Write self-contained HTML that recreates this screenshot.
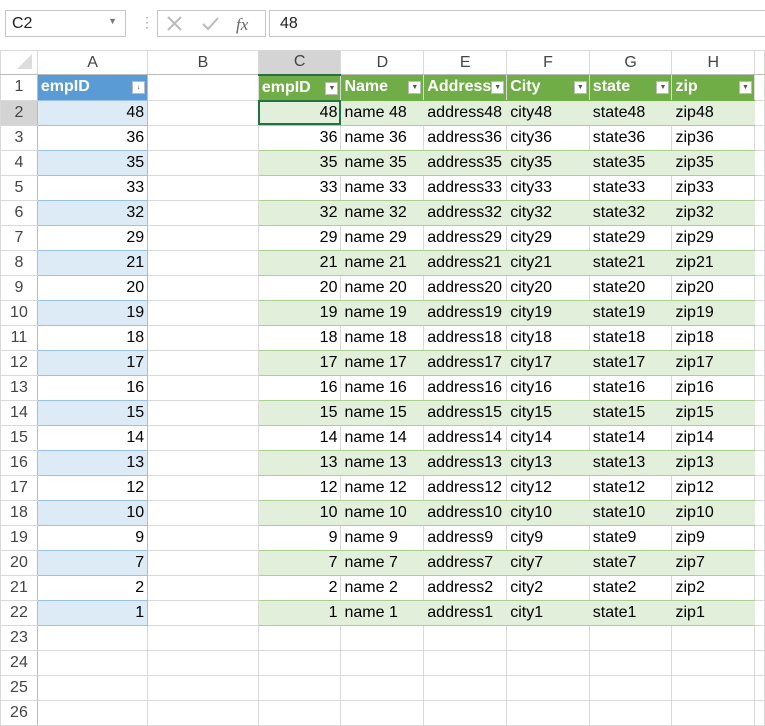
<!DOCTYPE html>
<html><head><meta charset="utf-8"><style>
body{margin:0;width:765px;height:725px;overflow:hidden;background:#fff;font-family:"Liberation Sans",Arial,sans-serif;position:relative}
.nb{position:absolute;left:5px;top:10px;width:121px;height:27px;border:1px solid #c6c6c6;box-sizing:border-box;font-size:16px;color:#222;padding:4px 6px}
.nb .ar{position:absolute;right:8px;top:5px;font-size:9px;color:#777}
.dots{position:absolute;left:140px;top:14px;color:#aaa;font-size:14px}
.fx{position:absolute;left:157px;top:10px;width:109px;height:27px;border:1px solid #c6c6c6;box-sizing:border-box}
.fi{position:absolute;left:269px;top:10px;width:500px;height:27px;border:1px solid #c6c6c6;box-sizing:border-box;font-size:16px;padding:4px 10px;color:#222}
table{position:absolute;left:0;top:50px;border-collapse:collapse;table-layout:fixed;font-size:16px}
td,th{height:24px;padding:0 3px;border:1px solid #d9d9d9;overflow:hidden;white-space:nowrap;color:#000;font-weight:normal}
th{background:#fff;color:#444;text-align:center;padding:0}
thead th{background:#fff;height:21px;border-bottom:1px solid #bbb;font-size:16px}
tbody th{border-right:1px solid #bbb}
td.n{text-align:right}
tbody tr:nth-child(even) td.a{background:#ddebf7}
tbody tr:nth-child(even) td.g{background:#e2efda}
tr.h td.a{background:#5b9bd5;color:#fff;font-weight:bold}
tr.h td.g{background:#70ad47;color:#fff;font-weight:bold}
td.a{border-color:#9bc2e6}
td.g{border-top-color:#a9d08e;border-bottom-color:#a9d08e;border-left-color:#e2efda;border-right-color:#e2efda}
tbody tr:nth-child(odd) td.g{border-left-color:#d9d9d9;border-right-color:#d9d9d9}
tr.h td.g{border-color:#70ad47}
.dd{display:inline-block;width:13px;height:13px;background:#fff;border:1px solid #bbb;box-sizing:border-box;position:absolute;right:2px;top:6px;font-size:7px;color:#555;text-align:center;line-height:11px;font-weight:normal}
tr.h td{position:relative}
.sel{outline:2px solid #217346;outline-offset:-2px}
</style></head><body>
<div class="nb">C2<span class="ar">▼</span></div>
<div class="dots">⋮</div>
<div class="fx"><svg width="107" height="25"><path d="M10 6l13 13M23 6L10 19" stroke="#bbb" stroke-width="2" fill="none"/><path d="M45 13l5 5 10-11" stroke="#bbb" stroke-width="2" fill="none"/><text x="78" y="19" font-family="Liberation Serif" font-style="italic" font-size="17" fill="#666">fx</text></svg></div>
<div class="fi">48</div>
<table>
<colgroup><col style="width:37px"><col style="width:111px"><col style="width:112px"><col style="width:83px"><col style="width:83px"><col style="width:83px"><col style="width:83px"><col style="width:83px"><col style="width:83px"><col style="width:10px"></colgroup>
<thead><tr><th style="background:#fff"><svg width="30" height="18"><path d="M28 3V18H13Z" fill="#ddd"/></svg></th><th>A</th><th>B</th><th style="background:#d4d4d4;border-bottom:2px solid #217346">C</th><th>D</th><th>E</th><th>F</th><th>G</th><th>H</th><th></th></tr></thead>
<tbody>
<tr class="h"><th>1</th><td class="a">empID<span class="dd">↓</span></td><td></td><td class="g">empID<span class="dd">▼</span></td><td class="g">Name<span class="dd">▼</span></td><td class="g">Address<span class="dd">▼</span></td><td class="g">City<span class="dd">▼</span></td><td class="g">state<span class="dd">▼</span></td><td class="g">zip<span class="dd">▼</span></td><td></td></tr>
<tr><th style="background:#d4d4d4">2</th><td class="a n">48</td><td></td><td class="g n sel">48</td><td class="g">name 48</td><td class="g">address48</td><td class="g">city48</td><td class="g">state48</td><td class="g">zip48</td><td></td></tr>
<tr><th>3</th><td class="a n">36</td><td></td><td class="g n">36</td><td class="g">name 36</td><td class="g">address36</td><td class="g">city36</td><td class="g">state36</td><td class="g">zip36</td><td></td></tr>
<tr><th>4</th><td class="a n">35</td><td></td><td class="g n">35</td><td class="g">name 35</td><td class="g">address35</td><td class="g">city35</td><td class="g">state35</td><td class="g">zip35</td><td></td></tr>
<tr><th>5</th><td class="a n">33</td><td></td><td class="g n">33</td><td class="g">name 33</td><td class="g">address33</td><td class="g">city33</td><td class="g">state33</td><td class="g">zip33</td><td></td></tr>
<tr><th>6</th><td class="a n">32</td><td></td><td class="g n">32</td><td class="g">name 32</td><td class="g">address32</td><td class="g">city32</td><td class="g">state32</td><td class="g">zip32</td><td></td></tr>
<tr><th>7</th><td class="a n">29</td><td></td><td class="g n">29</td><td class="g">name 29</td><td class="g">address29</td><td class="g">city29</td><td class="g">state29</td><td class="g">zip29</td><td></td></tr>
<tr><th>8</th><td class="a n">21</td><td></td><td class="g n">21</td><td class="g">name 21</td><td class="g">address21</td><td class="g">city21</td><td class="g">state21</td><td class="g">zip21</td><td></td></tr>
<tr><th>9</th><td class="a n">20</td><td></td><td class="g n">20</td><td class="g">name 20</td><td class="g">address20</td><td class="g">city20</td><td class="g">state20</td><td class="g">zip20</td><td></td></tr>
<tr><th>10</th><td class="a n">19</td><td></td><td class="g n">19</td><td class="g">name 19</td><td class="g">address19</td><td class="g">city19</td><td class="g">state19</td><td class="g">zip19</td><td></td></tr>
<tr><th>11</th><td class="a n">18</td><td></td><td class="g n">18</td><td class="g">name 18</td><td class="g">address18</td><td class="g">city18</td><td class="g">state18</td><td class="g">zip18</td><td></td></tr>
<tr><th>12</th><td class="a n">17</td><td></td><td class="g n">17</td><td class="g">name 17</td><td class="g">address17</td><td class="g">city17</td><td class="g">state17</td><td class="g">zip17</td><td></td></tr>
<tr><th>13</th><td class="a n">16</td><td></td><td class="g n">16</td><td class="g">name 16</td><td class="g">address16</td><td class="g">city16</td><td class="g">state16</td><td class="g">zip16</td><td></td></tr>
<tr><th>14</th><td class="a n">15</td><td></td><td class="g n">15</td><td class="g">name 15</td><td class="g">address15</td><td class="g">city15</td><td class="g">state15</td><td class="g">zip15</td><td></td></tr>
<tr><th>15</th><td class="a n">14</td><td></td><td class="g n">14</td><td class="g">name 14</td><td class="g">address14</td><td class="g">city14</td><td class="g">state14</td><td class="g">zip14</td><td></td></tr>
<tr><th>16</th><td class="a n">13</td><td></td><td class="g n">13</td><td class="g">name 13</td><td class="g">address13</td><td class="g">city13</td><td class="g">state13</td><td class="g">zip13</td><td></td></tr>
<tr><th>17</th><td class="a n">12</td><td></td><td class="g n">12</td><td class="g">name 12</td><td class="g">address12</td><td class="g">city12</td><td class="g">state12</td><td class="g">zip12</td><td></td></tr>
<tr><th>18</th><td class="a n">10</td><td></td><td class="g n">10</td><td class="g">name 10</td><td class="g">address10</td><td class="g">city10</td><td class="g">state10</td><td class="g">zip10</td><td></td></tr>
<tr><th>19</th><td class="a n">9</td><td></td><td class="g n">9</td><td class="g">name 9</td><td class="g">address9</td><td class="g">city9</td><td class="g">state9</td><td class="g">zip9</td><td></td></tr>
<tr><th>20</th><td class="a n">7</td><td></td><td class="g n">7</td><td class="g">name 7</td><td class="g">address7</td><td class="g">city7</td><td class="g">state7</td><td class="g">zip7</td><td></td></tr>
<tr><th>21</th><td class="a n">2</td><td></td><td class="g n">2</td><td class="g">name 2</td><td class="g">address2</td><td class="g">city2</td><td class="g">state2</td><td class="g">zip2</td><td></td></tr>
<tr><th>22</th><td class="a n">1</td><td></td><td class="g n">1</td><td class="g">name 1</td><td class="g">address1</td><td class="g">city1</td><td class="g">state1</td><td class="g">zip1</td><td></td></tr>
<tr><th>23</th><td></td><td></td><td></td><td></td><td></td><td></td><td></td><td></td><td></td></tr>
<tr><th>24</th><td></td><td></td><td></td><td></td><td></td><td></td><td></td><td></td><td></td></tr>
<tr><th>25</th><td></td><td></td><td></td><td></td><td></td><td></td><td></td><td></td><td></td></tr>
<tr><th>26</th><td></td><td></td><td></td><td></td><td></td><td></td><td></td><td></td><td></td></tr>
</tbody></table>
</body></html>
